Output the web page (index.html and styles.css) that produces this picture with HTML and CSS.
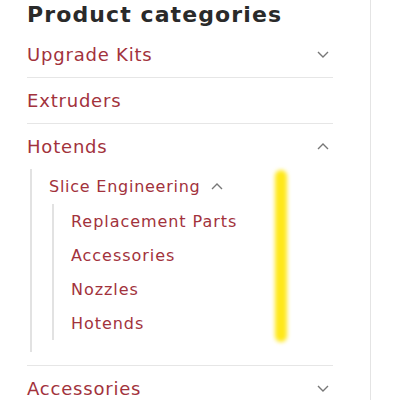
FILE: index.html
```html
<!DOCTYPE html>
<html lang="en">
<head>
    <meta charset="UTF-8">
    <title>Product categories</title>
    <link rel="stylesheet" href="styles.css">
</head>
<body>
    <aside class="sidebar">
        <h2 class="widget-title">Product categories</h2>
        <ul class="cat-list">
            <li class="cat-item">
                <div class="cat-row">
                    <a href="#">Upgrade Kits</a>
                    <svg class="chev" viewBox="0 0 12 7"><path d="M1 1l5 5 5-5"/></svg>
                </div>
            </li>
            <li class="cat-item">
                <div class="cat-row"><a href="#">Extruders</a></div>
            </li>
            <li class="cat-item open">
                <div class="cat-row">
                    <a href="#">Hotends</a>
                    <svg class="chev" viewBox="0 0 12 7"><path d="M1 6l5-5 5 5"/></svg>
                </div>
                <ul class="sub-list">
                    <li>
                        <div class="sub-row">
                            <a href="#">Slice Engineering</a>
                            <svg class="chev small" viewBox="0 0 12 7"><path d="M1 6l5-5 5 5"/></svg>
                        </div>
                        <ul class="subsub-list">
                            <li><a href="#">Replacement Parts</a></li>
                            <li><a href="#">Accessories</a></li>
                            <li><a href="#">Nozzles</a></li>
                            <li><a href="#">Hotends</a></li>
                        </ul>
                    </li>
                </ul>
                <span class="marker"></span>
            </li>
            <li class="cat-item">
                <div class="cat-row">
                    <a href="#">Accessories</a>
                    <svg class="chev" viewBox="0 0 12 7"><path d="M1 1l5 5 5-5"/></svg>
                </div>
            </li>
        </ul>
    </aside>
</body>
</html>
```

FILE: styles.css
```css
* {
    margin: 0;
    padding: 0;
    box-sizing: border-box;
}

body {
    font-family: "DejaVu Sans", sans-serif;
    background: #fff;
    overflow: hidden;
}

a {
    color: #a2323c;
    text-decoration: none;
}

/* Sidebar column */
.sidebar {
    width: 371px;
    height: 400px;
    border-right: 1px solid #e4e4e4;
    padding-left: 27px;
}

.widget-title {
    height: 32px;
    font-size: 22px;
    font-weight: bold;
    color: #2a2a2a;
    line-height: 30px;
    letter-spacing: 1.1px;
}

.cat-list {
    list-style: none;
    width: 306px;
}

.cat-item {
    border-bottom: 1px solid #e6e6e6;
    position: relative;
}

.cat-row {
    display: flex;
    align-items: center;
    justify-content: space-between;
    height: 45px;
    font-size: 18px;
    letter-spacing: 0.8px;
}

.chev {
    width: 12px;
    height: 7px;
    margin-right: 4px;
    fill: none;
    stroke: #777;
    stroke-width: 1.4;
}

/* Expanded sub categories */
.sub-list {
    list-style: none;
    margin-left: 3px;
    margin-bottom: 13px;
    padding-left: 17px;
    padding-bottom: 12px;
    border-left: 2px solid #e2e2e2;
}

.sub-row {
    display: flex;
    align-items: center;
    gap: 10px;
    height: 35px;
    font-size: 16px;
    letter-spacing: 0.75px;
}

.chev.small {
    margin-right: 0;
}

.subsub-list {
    list-style: none;
    margin-left: 3px;
    padding-left: 17px;
    border-left: 2px solid #e2e2e2;
}

.subsub-list li {
    height: 34px;
    display: flex;
    align-items: center;
    font-size: 16px;
    letter-spacing: 0.95px;
}

/* highlighter stroke over the list */
.marker {
    position: absolute;
    left: 248px;
    top: 46px;
    width: 12px;
    height: 172px;
    background: #ffe81a;
    border-radius: 6px;
    filter: blur(2px);
}
```
